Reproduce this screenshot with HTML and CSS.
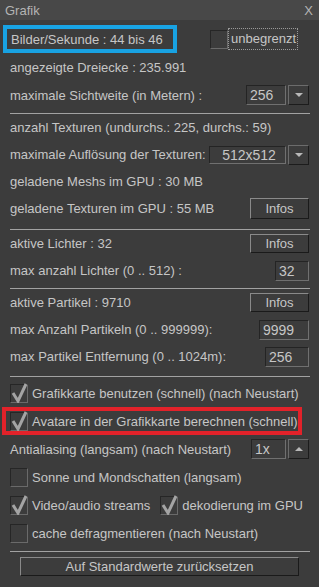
FILE: index.html
```html
<!DOCTYPE html>
<html lang="de">
<head>
    <meta charset="UTF-8">
    <title>Grafik</title>
    <link rel="stylesheet" href="styles.css">
</head>
<body>
    <div class="titlebar">
        <span>Grafik</span>
        <span class="close">X</span>
    </div>
    <div class="content">
        <!-- Bildrate / Sichtweite -->
        <div class="group g1">
            <div class="row">
                <div class="fps">Bilder/Sekunde : 44 bis 46</div>
                <div class="check unlimited">
                    <span class="box"></span>
                    <span class="focus">unbegrenzt</span>
                </div>
            </div>
            <div class="row">angezeigte Dreiecke : 235.991</div>
            <div class="row">
                <span class="label">maximale Sichtweite (in Metern) :</span>
                <div class="combo">
                    <span class="field view">256</span>
                    <span class="drop"><span class="arrow down"></span></span>
                </div>
            </div>
        </div>
        <div class="sep"></div>
        <!-- Texturen -->
        <div class="group g2">
            <div class="row">anzahl Texturen (undurchs.: 225, durchs.: 59)</div>
            <div class="row">
                <span class="label">maximale Auflösung der Texturen:</span>
                <div class="combo">
                    <span class="field res">512x512</span>
                    <span class="drop"><span class="arrow down"></span></span>
                </div>
            </div>
            <div class="row">geladene Meshs im GPU : 30 MB</div>
            <div class="row">
                <span class="label">geladene Texturen im GPU : 55 MB</span>
                <button class="btn infos tall">Infos</button>
            </div>
        </div>
        <div class="sep"></div>
        <!-- Lichter -->
        <div class="group g3">
            <div class="row">
                <span class="label">aktive Lichter : 32</span>
                <button class="btn infos">Infos</button>
            </div>
            <div class="row">
                <span class="label">max anzahl Lichter (0 .. 512) :</span>
                <span class="input lights">32</span>
            </div>
        </div>
        <div class="sep"></div>
        <!-- Partikel -->
        <div class="group g4">
            <div class="row">
                <span class="label">aktive Partikel : 9710</span>
                <button class="btn infos">Infos</button>
            </div>
            <div class="row">
                <span class="label">max Anzahl Partikeln (0 .. 999999):</span>
                <span class="input count">9999</span>
            </div>
            <div class="row">
                <span class="label">max Partikel Entfernung (0 .. 1024m):</span>
                <span class="input dist">256</span>
            </div>
        </div>
        <div class="sep"></div>
        <!-- Optionen -->
        <div class="group g5">
            <div class="row">
                <div class="check">
                    <span class="box"><svg class="tick" viewBox="0 0 16 20"><path d="M2 10 L7 18 L15 1"/></svg></span>
                    <span>Grafikkarte benutzen (schnell) (nach Neustart)</span>
                </div>
            </div>
            <div class="row marked">
                <div class="check">
                    <span class="box"><svg class="tick" viewBox="0 0 16 20"><path d="M2 10 L7 18 L15 1"/></svg></span>
                    <span>Avatare in der Grafikkarte berechnen (schnell)</span>
                </div>
            </div>
            <div class="row">
                <span class="label">Antialiasing (langsam) (nach Neustart)</span>
                <div class="combo aa">
                    <span class="field small">1x</span>
                    <span class="drop"><span class="arrow up"></span></span>
                </div>
            </div>
            <div class="row">
                <div class="check">
                    <span class="box"></span>
                    <span>Sonne und Mondschatten (langsam)</span>
                </div>
            </div>
            <div class="row">
                <div class="check">
                    <span class="box"><svg class="tick" viewBox="0 0 16 20"><path d="M2 10 L7 18 L15 1"/></svg></span>
                    <span>Video/audio streams</span>
                </div>
                <div class="check gpu">
                    <span class="box"><svg class="tick" viewBox="0 0 16 20"><path d="M2 10 L7 18 L15 1"/></svg></span>
                    <span>dekodierung im GPU</span>
                </div>
            </div>
            <div class="row">
                <div class="check">
                    <span class="box"></span>
                    <span>cache defragmentieren (nach Neustart)</span>
                </div>
            </div>
        </div>
        <div class="sep"></div>
        <button class="btn reset">Auf Standardwerte zurücksetzen</button>
    </div>
</body>
</html>
```

FILE: styles.css
```css
body {
    margin: 0;
    background: #3c3c3c;
    font-family: "Liberation Sans", Arial, sans-serif;
    font-size: 13px;
    color: #c6c6c6;
}
.titlebar {
    height: 20px;
    background: #484848;
    display: flex;
    align-items: center;
    justify-content: space-between;
    padding: 0 6px 0 5px;
    color: #b4b4b4;
}
.content {
    padding: 5px 10px 0 10px;
}
.row {
    display: flex;
    align-items: center;
    height: 27px;
    white-space: nowrap;
}
.label {
    flex: 1;
}
.g1 .row { height: 28px; }
.g1 { padding-bottom: 4px; }
.g2 { padding-bottom: 7px; }
.g3 { padding-bottom: 4px; }
.g4 { padding-bottom: 6px; }
.g5 { padding: 2px 0 4px; }
.g5 .row { height: 28px; }
.sep {
    height: 1px;
    background: #a2a2a2;
    margin-right: -1px;
}
/* markierungen */
.fps {
    box-sizing: border-box;
    height: 28px;
    width: 174px;
    margin-left: -7px;
    padding-left: 4px;
    border: 4px solid #18a2e2;
    display: flex;
    align-items: center;
}
.row.marked {
    box-sizing: border-box;
    margin: 0 7px 0 -8px;
    padding-left: 4px;
    border: 4px solid #e2222a;
}
/* checkboxen */
.check {
    display: flex;
    align-items: center;
    gap: 4px;
}
.check.unlimited {
    margin-left: 33px;
    gap: 0;
}
.check.gpu {
    margin-left: 10px;
}
.focus {
    border: 1px dotted #9a9a9a;
    padding: 2px 1px 3px 2px;
}
.box {
    box-sizing: border-box;
    width: 18px;
    height: 19px;
    border: 1px solid;
    border-color: #262626 #6a6a6a #6a6a6a #262626;
    position: relative;
}
.tick {
    position: absolute;
    left: 0;
    top: -2px;
    width: 16px;
    height: 20px;
}
.tick path {
    fill: none;
    stroke: #a4a4a4;
    stroke-width: 3;
}
/* combos und felder */
.combo {
    display: flex;
    align-items: center;
    gap: 2px;
}
.field, .input {
    box-sizing: border-box;
    border: 1px solid;
    border-color: #242424 #707070 #707070 #242424;
    height: 20px;
    display: flex;
    align-items: center;
    padding-left: 3px;
    font-size: 14px;
}
.field.view { width: 40px; }
.field.small { width: 35px; }
.field.res {
    width: 77px;
    height: 18px;
    justify-content: center;
}
.drop {
    box-sizing: border-box;
    width: 21px;
    height: 20px;
    border: 1px solid;
    border-color: #6c6c6c #1c1c1c #1c1c1c #6c6c6c;
    display: flex;
    align-items: center;
    justify-content: center;
}
.arrow {
    width: 0;
    height: 0;
    border-left: 4px solid transparent;
    border-right: 4px solid transparent;
}
.arrow.down { border-top: 4px solid #b8b8b8; }
.arrow.up { border-bottom: 4px solid #b8b8b8; }
.input.lights { width: 34px; }
.input.count { width: 50px; }
.input.dist { width: 44px; }
/* buttons */
.btn {
    box-sizing: border-box;
    background: #3c3c3c;
    color: #c6c6c6;
    font-family: inherit;
    font-size: 13px;
    border: 1px solid;
    border-color: #8a8a8a #1a1a1a #1a1a1a #8a8a8a;
    padding: 0;
}
.btn.infos {
    width: 59px;
    height: 19px;
}
.btn.infos.tall { height: 21px; }
.btn.reset {
    display: block;
    width: 279px;
    height: 19px;
    margin: 5px 0 0 10px;
}
```
